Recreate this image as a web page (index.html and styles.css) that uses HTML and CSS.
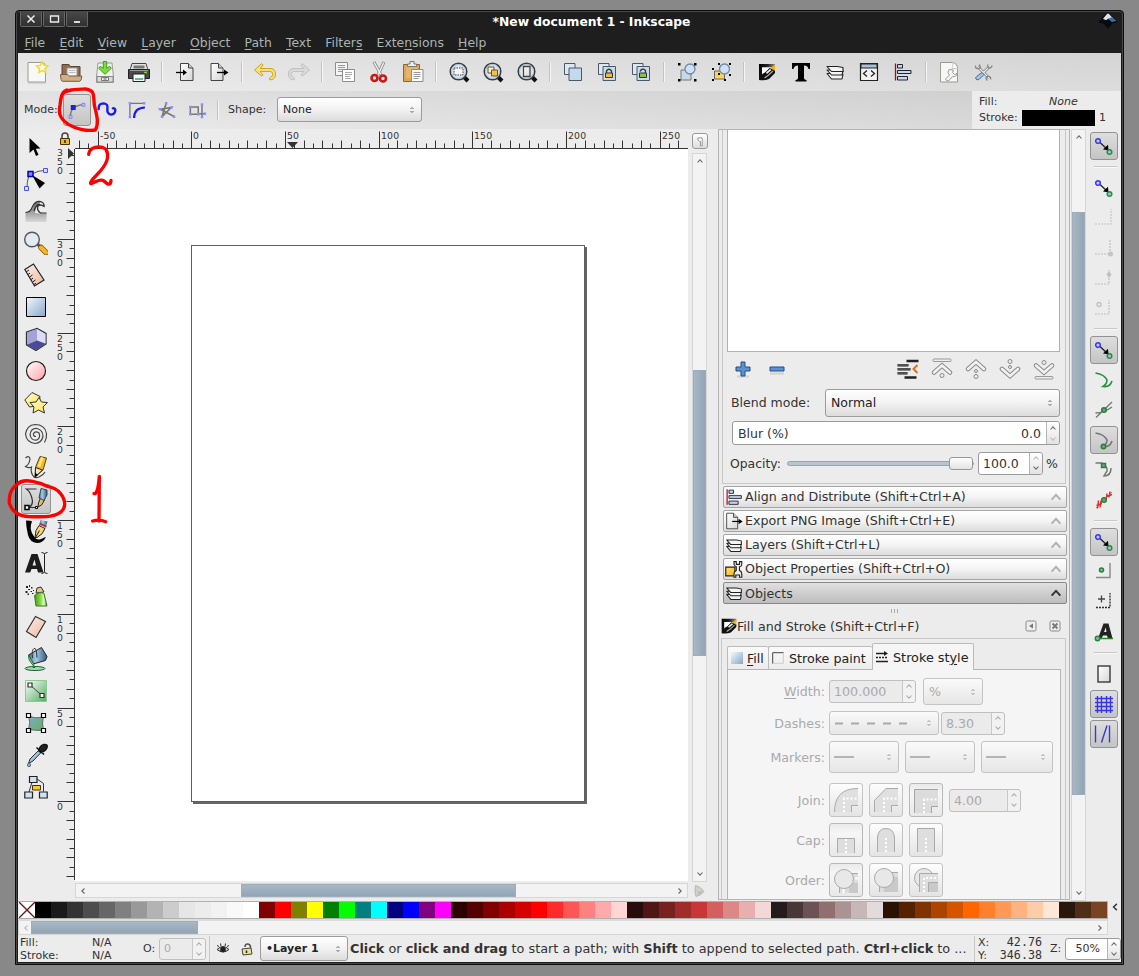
FILE: index.html
```html
<!DOCTYPE html>
<html lang="en">
<head>
<meta charset="utf-8">
<title>*New document 1 - Inkscape</title>
<link rel="stylesheet" href="styles.css">
</head>
<body>
<svg class="sprite" width="0" height="0" aria-hidden="true">
  <defs>
    <linearGradient id="gPaper" x1="0" y1="0" x2="1" y2="1"><stop offset="0" stop-color="#fff"/><stop offset="1" stop-color="#d6d6d6"/></linearGradient>
    <linearGradient id="gBlue" x1="0" y1="0" x2="1" y2="1"><stop offset="0" stop-color="#f4f8fb"/><stop offset="1" stop-color="#85a8cb"/></linearGradient>
    <linearGradient id="gPink" x1="0" y1="0" x2="1" y2="1"><stop offset="0" stop-color="#fff"/><stop offset="1" stop-color="#ffa0a8"/></linearGradient>
    <linearGradient id="gPeach" x1="0" y1="0" x2="1" y2="1"><stop offset="0" stop-color="#fbeee9"/><stop offset="1" stop-color="#f0b79f"/></linearGradient>
    <linearGradient id="gGreen" x1="0" y1="0" x2="1" y2="1"><stop offset="0" stop-color="#fff"/><stop offset="1" stop-color="#4fae5c"/></linearGradient>
    <linearGradient id="gTeal" x1="0" y1="0" x2="1" y2="1"><stop offset="0" stop-color="#86a9d0"/><stop offset="1" stop-color="#5db35c"/></linearGradient>
    <linearGradient id="gSteel" x1="0" y1="0" x2="1" y2="0"><stop offset="0" stop-color="#3c6c8c"/><stop offset=".4" stop-color="#a5cbe4"/><stop offset="1" stop-color="#2e5a7c"/></linearGradient>
    <linearGradient id="gYellow" x1="0" y1="0" x2="1" y2="1"><stop offset="0" stop-color="#fffbd8"/><stop offset="1" stop-color="#ffe24a"/></linearGradient>
    <linearGradient id="gGold" x1="0" y1="0" x2="1" y2="1"><stop offset="0" stop-color="#ffe680"/><stop offset="1" stop-color="#f5b400"/></linearGradient>
    <linearGradient id="gCan" x1="0" y1="0" x2="1" y2="0"><stop offset="0" stop-color="#3c9a1c"/><stop offset=".5" stop-color="#8fdc48"/><stop offset=".75" stop-color="#e2fbc8"/><stop offset="1" stop-color="#3c9a1c"/></linearGradient>
    <linearGradient id="gWave" x1="0" y1="0" x2="0" y2="1"><stop offset="0" stop-color="#666"/><stop offset="1" stop-color="#d8d8d8"/></linearGradient>
    <linearGradient id="gFrame" x1="0" y1="0" x2="1" y2=".3"><stop offset="0" stop-color="#000"/><stop offset=".5" stop-color="#222"/><stop offset="1" stop-color="#999"/></linearGradient>
  </defs>

  <symbol id="new" viewBox="0 0 24 24"><path d="M3 2.500h13.500q4 0 4 4V22H3z" fill="#f8f8f6" stroke="#999b96"/><path d="M3 23h18" stroke="#bbb"/><path d="M17.300 1.800l1.700 3.500 3.900.6-2.800 2.700.6 3.900-3.400-1.800-3.500 1.800.7-3.900-2.900-2.700 3.900-.6z" fill="#fffde0" stroke="#f2d832" stroke-width="1.500"/></symbol>
  <symbol id="open" viewBox="0 0 24 24"><path d="M3 18V4.500h7l1.500 2H21V18z" fill="#8b6f50" stroke="#5a4430"/><path d="M8 8h10v9H8z" fill="#f5f5f5" stroke="#999"/><path d="M9.500 10.500h7M9.500 12.500h7" stroke="#bbb"/><path d="M1.500 14.500h7l2 1.500h12.300q-.2 5-2 5.300H3.500q-1.800 0-2-6.800z" fill="#cfae88" stroke="#7a5c3c"/></symbol>
  <symbol id="save" viewBox="0 0 24 24"><path d="M5 3h14l1.500 14v5.500h-17V17z" fill="#f1f1ef" stroke="#9a9c98"/><path d="M4 16.500h16v5.500H4z" fill="#ddd" stroke="#888a85"/><path d="M8.500 17.500h7v3h-7z" fill="#fafafa" stroke="#777"/><path d="M10.500 19h3" stroke="#555"/><path d="M10.300 1.500h3.400v6.800l3-2 1.600 2L12 14.300 5.700 8.300l1.600-2 3 2z" fill="#7fdc3c" stroke="#3f9f1a"/></symbol>
  <symbol id="print" viewBox="0 0 24 24"><path d="M5 3.500h14l1.500 5v8h-17v-8z" fill="#e4e4e2" stroke="#444"/><path d="M6.500 5.500h11v3h-11z" fill="#777"/><path d="M1.500 9.500h21v9h-21z" fill="#4a4b4a" stroke="#222"/><path d="M3 10.500h18" stroke="#999"/><path d="M6 14h12v7.500H6z" fill="#fbfbfb" stroke="#222"/><path d="M8 18h8v2H8z" fill="#5fc08a"/><path d="M17 12.500h3" stroke="#7bd23a" stroke-width="1.500"/></symbol>
  <symbol id="import" viewBox="0 0 24 24"><path d="M7.500 3.500h8l4.500 4.500v12.500H7.500z" fill="url(#gPaper)" stroke="#444"/><path d="M15.500 3.500v4.500H20" fill="#ccc" stroke="#444"/><path d="M3 12.500h8" stroke="#000" stroke-width="1.300"/><path d="M10 9.500l4 3-4 3z"/></symbol>
  <symbol id="export" viewBox="0 0 24 24"><path d="M4 3.500h7.500l4.500 4.500v12.500H4z" fill="url(#gPaper)" stroke="#444"/><path d="M11.500 3.500v4.500H16" fill="#ccc" stroke="#444"/><path d="M10 12.500h9" stroke="#000" stroke-width="1.300"/><path d="M17 9.500l4.500 3-4.500 3z"/></symbol>
  <symbol id="undo" viewBox="0 0 24 24"><path d="M1.500 10l7-6.300 1.600 1.300-3 3.500H18q4.500.5 4.500 5.500t-4.300 5.700h-1.500q-.8-2 .8-2.500 2.500-.5 2.300-3-.2-2.500-2.500-2.800H7.100l3 3.500L8.500 16z" fill="#f7e27a" stroke="#caa41b"/></symbol>
  <symbol id="redo" viewBox="0 0 24 24"><path d="M22.500 10l-7-6.300-1.600 1.300 3 3.500H6Q1.500 9 1.500 14t4.300 5.700h1.500q.8-2-.8-2.500-2.500-.5-2.300-3 .2-2.500 2.500-2.800h10.200l-3 3.500 1.600 1.100z" fill="#dadada" stroke="#c0c0c0"/></symbol>
  <symbol id="copy" viewBox="0 0 24 24"><path d="M2.500 2.500h12v13h-12z" fill="#f4f4f4" stroke="#8c8e8a"/><path d="M5 5.500h7M5 7.500h7M5 9.500h5M5 11.500h7" stroke="#999"/><path d="M9.500 9.500h12v12h-12z" fill="#fff" stroke="#8c8e8a"/><path d="M12 12.500h7M12 14.500h7M12 16.500h5M12 18.500h6" stroke="#aaa"/></symbol>
  <symbol id="cut" viewBox="0 0 24 24"><path d="M7 2l7 13M17 2l-6 13" stroke="#8a8c88" stroke-width="3"/><path d="M7.200 2.500l6.600 12M16.800 2.500l-5.600 12" stroke="#eee" stroke-width="1.500"/><circle cx="7.500" cy="18" r="3" fill="none" stroke="#c81818" stroke-width="2.600"/><circle cx="16" cy="18.500" r="3" fill="none" stroke="#c81818" stroke-width="2.600"/></symbol>
  <symbol id="paste" viewBox="0 0 24 24"><path d="M2.500 4.500h16v17h-16z" fill="#dba65a" stroke="#9a6420"/><path d="M5 7h11v11H5z" fill="#e6b56c"/><path d="M6.500 6.500V4h2.500V1.500h4V4h2.500v2.500z" fill="#eee" stroke="#777"/><path d="M10.500 9.500h11.500v12H10.500z" fill="#fafafa" stroke="#8c8e8a"/><path d="M12.500 12.500h7M12.500 14.500h7M12.500 16.500h7M12.500 18.500h5" stroke="#999"/></symbol>
  <symbol id="lens" viewBox="0 0 24 24"><path d="M17 17l4 4" stroke="#111" stroke-width="4"/><circle cx="11.500" cy="11.500" r="8.300" fill="#dce6f1" stroke="#3c3f42" stroke-width="1.500"/><circle cx="11.500" cy="11.500" r="7" fill="none" stroke="#aebfd0"/></symbol>
  <symbol id="zoomsel" viewBox="0 0 24 24"><use href="#lens"/><rect x="7" y="8" width="9" height="7" fill="#f5f5f5" stroke="#444" stroke-dasharray="1.500 1"/></symbol>
  <symbol id="zoomdraw" viewBox="0 0 24 24"><use href="#lens"/><path d="M7 7h6v6H7z" fill="#fff3c0" stroke="#555"/><path d="M10.500 10h6v6h-6z" fill="#f6c23a" stroke="#555"/></symbol>
  <symbol id="zoompage" viewBox="0 0 24 24"><use href="#lens"/><path d="M8.500 6.500h6.500v10H8.500z" fill="url(#gPaper)" stroke="#444" stroke-width="1.300"/></symbol>
  <symbol id="dup" viewBox="0 0 24 24"><path d="M3.500 3.500h10.500v11h-10.500z" fill="#dde8f3" stroke="#4c5864"/><path d="M8 8h12.500v12.500H8z" fill="#c5d9ee" stroke="#4c5864"/></symbol>
  <symbol id="clone" viewBox="0 0 24 24"><path d="M3.500 3.500h10.500v11h-10.500z" fill="#dde8f3" stroke="#4c5864"/><path d="M8 6.500h12.500v14H8z" fill="#c9daeb" stroke="#4c5864"/><path d="M11.500 13v-2q2.500-3.500 5 0V13" fill="none" stroke="#333" stroke-width="1.300"/><path d="M10.500 13h7v4.500h-7z" fill="#f6bb2a" stroke="#333"/></symbol>
  <symbol id="unclone" viewBox="0 0 24 24"><path d="M3.500 3.500h10.500v11h-10.500z" fill="#dde8f3" stroke="#4c5864"/><path d="M8 6.500h12.500v14H8z" fill="#c9daeb" stroke="#4c5864"/><path d="M11 11.500q2-4 5.500-1V13" fill="none" stroke="#333" stroke-width="1.300"/><path d="M10.500 13h7v4.500h-7z" fill="#8bbf4c" stroke="#333"/></symbol>
  <symbol id="group" viewBox="0 0 24 24"><path d="M6 10h10v10H6z" fill="#c8d8e8" stroke="#777"/><circle cx="15" cy="9" r="5" fill="#cfe0f2" stroke="#6d8aa8" stroke-width="1.300"/><path d="M3 3h2.500v2.500H3zM19 3h2.500v2.500H19zM3 19h2.500v2.500H3zM19 19h2.500v2.500H19z"/></symbol>
  <symbol id="ungroup" viewBox="0 0 24 24"><path d="M5.500 11h10v8h-10z" fill="#ffd44a" stroke="#666"/><circle cx="15.500" cy="9" r="5" fill="#cfe0f2" stroke="#6d8aa8" stroke-width="1.300"/><path d="M9 3h2v2H9zM20 3h2v2h-2zM3 8h2v2H3zM3 19h2v2H3zM15 19h2v2h-2zM20 14h2v2h-2zM9 13h2v2H9z"/></symbol>
  <symbol id="fillstroke" viewBox="0 0 24 24"><path d="M4 4h16v3.500H7V17l-3 3z" fill="url(#gFrame)"/><path d="M7 7.500h9.500L7 17z" fill="#fff"/><path d="M4 20Q5 14.500 10 12.500l4.500-4.500 5.500 2v3l-6 6q-4 1.800-10 1z" fill="#111"/><path d="M9.500 18l3.500-2.500 5-4.500" fill="none" stroke="#a8a8a4" stroke-width="1.300"/><path d="M11 12.500l4-3.500 1.500 1-4.500 4z" fill="#eee"/><path d="M15.500 8L20 4.500v6.500z" fill="#f6b200"/></symbol>
  <symbol id="text" viewBox="0 0 24 24"><path d="M3 3h18v6h-1.500Q19 5.500 15 5.500V18q0 2 2.500 2v1.500h-11V20Q9 20 9 18V5.500Q5 5.500 4.500 9H3z"/></symbol>
  <symbol id="layers" viewBox="0 0 24 24"><g fill="#f4f4f4" stroke="#222" stroke-width="1.100" stroke-linejoin="round"><path d="M4 13.500l4.500 5.500h10.500l1-4.500-4.500-1z"/><path d="M4 10l4.500 5h10.500l1-4-4.500-1z"/><path d="M4 6.500h10.500l5.500 1v4H8.500z"/></g></symbol>
  <symbol id="xml" viewBox="0 0 24 24"><path d="M3.500 3.500h17v17h-17z" fill="#f2f2f2" stroke="#222" stroke-width="1.200"/><path d="M4 4h16v4H4z" fill="#a9c1d9" stroke="#222"/><path d="M10 10.500l-3.500 3 3.500 3M14 10.500l3.500 3-3.500 3" fill="none" stroke="#222" stroke-width="1.300"/></symbol>
  <symbol id="align" viewBox="0 0 24 24"><path d="M4.500 3.500v17" stroke="#c00010" stroke-width="1.300"/><path d="M6.500 4.500h5v3.500h-5zM6.500 10.500h13.500v3h-13.500zM6.500 16.500h10v3.500h-10z" fill="#c5d9ee" stroke="#223"/></symbol>
  <symbol id="docprops" viewBox="0 0 24 24"><path d="M3.500 2.500h12q5 1 5 6v13.500h-17z" fill="#f7f7f6" stroke="#999b96"/><path d="M15.500 2.500q1 3-.5 6h5.500" fill="#fff" stroke="#ccc"/><path d="M12 9.500q-2.500 3 .5 5.500l-4 4q1 2.500 3 2l4-4.500q4 1 4.500-3l-2.500 1-2-2 1-2.500z" fill="#f4f4f4" stroke="#999b96"/></symbol>
  <symbol id="prefs" viewBox="0 0 24 24"><path d="M7 7l11 11M18 7l-6 6" stroke="#777" stroke-width="2.600"/><path d="M7 7l11 11M18 7l-6 6" stroke="#eee" stroke-width="1.200"/><path d="M4.500 5.500q-.5 3.500 3 3t.5-4M19.800 19.500q.2-3.500-3-3t-.5 4M17 4.500q-1 4 1.500 3.500t2.500-2.500" fill="none" stroke="#888" stroke-width="1.300"/><path d="M11 12.500l2 2-5 5q-2 .8-3-.5t.7-2.500z" fill="#a9c5e8" stroke="#3d68a4"/></symbol>

  <symbol id="bezier" viewBox="0 0 24 24"><path d="M4 20Q4 7 19 5.500" fill="none" stroke="#777" stroke-width="1.700"/><path d="M4.500 6h6v6h-6z" fill="#2020d8"/><path d="M2.500 18.500h3.500v3.500H2.500zM18 4h3.500v3.500H18z" fill="#c0c4ff" stroke="#7078f0"/></symbol>
  <symbol id="spiro" viewBox="0 0 24 24"><path d="M2 11Q1.500 4 8 4q5.500.5 4.500 6.500t4.500 7q5-.5 5-5.500-.5-2.500-3-2" fill="none" stroke="#1a1af0" stroke-width="2.900" stroke-linecap="round"/></symbol>
  <symbol id="bspline" viewBox="0 0 24 24"><path d="M3.500 20.500V4H20" fill="none" stroke="#777" stroke-width="1.600"/><path d="M2 2.500h3v3H2zM2 19h3v3H2zM19 2.500h3v3h-3z" fill="#8c90f4"/><path d="M8.500 21.500q0-12 13-12.500" fill="none" stroke="#1a1af0" stroke-width="2.700"/></symbol>
  <symbol id="zigzag" viewBox="0 0 24 24"><path d="M11 4L6 20 17 9 4 11l17 9" fill="none" stroke="#777" stroke-width="2"/><g fill="#8c90f4"><path d="M9.500 2.500h3v3h-3zM2.500 9.500h3v3h-3zM4.500 18.500h3v3h-3zM16 7.500h3v3h-3zM19 18.500h3v3h-3z"/></g></symbol>
  <symbol id="paraxial" viewBox="0 0 24 24"><path d="M4 17V8.500h9.500V17zM13 16.500h9M18 6v15" fill="none" stroke="#777" stroke-width="1.800"/><g fill="#8c90f4"><path d="M2.500 7h3v3h-3zM2.500 15.500h3v3h-3zM12 15.500h3v3h-3zM16.500 4h3v3h-3zM16.500 19h3v3h-3zM20 15h3v3h-3z"/></g></symbol>

  <symbol id="selector" viewBox="0 0 24 24"><path d="M5.500 3v15l4-3.500 2.500 6.500 2.500-1.200-2.700-6 4.700-.3z"/></symbol>
  <symbol id="nodes" viewBox="0 0 24 24"><path d="M3 21Q3 8 8 7q6-3.500 12-3.500" fill="none" stroke="#555"/><path d="M4 4.500h5v5h-5z" fill="#8088ff" stroke="#0000d0" stroke-width="1.500"/><path d="M.5 19.500h4v4h-4zM19.500 1.500h4v4h-4z" fill="#dcdcff" stroke="#4a52ee"/><path d="M8 8l13 8-5.500 5.500z"/></symbol>
  <symbol id="tweak" viewBox="0 0 24 24"><path d="M1.500 14q5 .5 7-5 2-7 8-6 4.500 1 4.500 5-3-3-5.500-1-2 2.500.5 6 3 2 6.500 1v9h-21z" fill="url(#gWave)"/><path d="M11 14q1-8 5-10.500 3 0 4.500 3-4-2-6 1-1 4 2 7z" fill="#eee"/><path d="M1.500 13.500q5 0 7-6 3-6 8-5 4 1 3.500 5-4-3-6.500 0-.5 4.500 3 6.500h6M10 12q2-7 6-7" fill="none" stroke="#333" stroke-width="1.200"/></symbol>
  <symbol id="magnify" viewBox="0 0 24 24"><path d="M13 13l4 3" stroke="#555" stroke-width="3"/><path d="M17 16.500l5 5" stroke="#775511" stroke-width="5.500" stroke-linecap="round"/><path d="M17 16.500l5 5" stroke="#f8b421" stroke-width="4" stroke-linecap="round"/><circle cx="8" cy="8.500" r="7.300" fill="#e1ebf3" stroke="#555" stroke-width="1.400"/></symbol>
  <symbol id="measure" viewBox="0 0 24 24"><path d="M.8 6.500L9.500 1l10.500 16L10.500 23z" fill="url(#gPeach)" stroke="#222" stroke-width="1.200"/><path d="M2 9l3-2M4 11.500l2-1.300M5.500 14l3-2M7 16.500l2-1.300M8.500 19l3-2M10 21.500l2-1.300" stroke="#222"/></symbol>
  <symbol id="rect" viewBox="0 0 24 24"><path d="M2.500 2.500h19v19h-19z" fill="url(#gBlue)" stroke="#000"/></symbol>
  <symbol id="box3d" viewBox="0 0 24 24"><path d="M2.500 5L13 1.500l9 5v10.500L12 23.500 2.500 18z" fill="#b0b0e0" stroke="#333" stroke-width="1.300"/><path d="M13 2l8.500 5v9.500l-8.500-3z" fill="#dcdcfa"/><path d="M3 5.500l10-3.500v11.500L3 17.500z" fill="#a3a3d4"/><path d="M3 17.800l10-4.300 8.500 3.200-9.500 6z" fill="#4a4a98"/></symbol>
  <symbol id="ellipse" viewBox="0 0 24 24"><circle cx="12" cy="12" r="9.500" fill="url(#gPink)" stroke="#222" stroke-width="1.200"/></symbol>
  <symbol id="star" viewBox="0 0 24 24"><path d="M.8 9L8 1.500l8 4-1 9-9.500 1.500z" fill="url(#gYellow)" stroke="#333"/><path d="M15 6.500l2.500 4.500 6 .5-4.500 4.500 1.500 6-6-3-5.500 3 1-6L6 11.500l6-.5z" fill="url(#gYellow)" stroke="#333"/></symbol>
  <symbol id="spiral" viewBox="0 0 24 24"><path d="M12 13.500q-3 0-2.500-3 2-3 5.500-.5 2 4.500-2 7-6 1-7-5.500Q7 5 13 5.500q6 1.500 6 8-1.500 6.500-8 7Q2.500 19.500 1.500 11 3 2 11 1.500q10 0 11.500 9 .5 5-2 9" fill="none" stroke="#444" stroke-width="1.200"/></symbol>
  <symbol id="pencil" viewBox="0 0 24 24"><path d="M1.500 3q4-3 4.500 1Q5 10 1.500 11.500q3 2 6 .5-1 5 1 8 2 4 6.500 2t6-5" fill="none" stroke="#444" stroke-width="1.200"/><path d="M12 11l4-9.500 6.500 1.500L19 15l-7.500 6.500z" fill="#f8b81c" stroke="#554411"/><path d="M15 11.500l3.500-9" stroke="#ffe790" stroke-width="2.500"/><path d="M11.500 12.500l7 2.500-7.500 7z" fill="#f6e3b2" stroke="#222"/><path d="M11 17.500l3 2.500-3 2.500z"/></symbol>
  <symbol id="pen" viewBox="0 0 24 24"><path d="M12.500 2H2.500Q7 5 8.500 14q0 4-3 6.500h8" fill="none" stroke="#333" stroke-width="1.200"/><path d="M1 18.500h4v4H1z" fill="#fff" stroke="#000" stroke-width="1.500"/><path d="M11.500 19.500h2v2h-2z" fill="#fff" stroke="#000"/><path d="M16.500 11l4 2-3 5-3.500 2 .5-4z" fill="#edbd55" stroke="#222"/><path d="M17 1.500l6 1.500v5l-3 5.500-5-2.500z" fill="url(#gSteel)" stroke="#345"/></symbol>
  <symbol id="calligraphy" viewBox="0 0 24 24"><path d="M2 1.500q5 0 6 1Q4.500 10 10 17.500q3 4.500 7 2.500t5-2q-3 6-9 6Q6 23.500 4 16 2 8 2 1.500z"/><path d="M11 18.500q0-8 4-12l6 3q-2 6-8 9z" fill="#f5d377" stroke="#222"/><path d="M11.500 18.500l4-7" stroke="#222"/><path d="M16.500 1l7 1.500-2 6.500-6-3z" fill="url(#gSteel)"/><path d="M15.500 4.500l7 3" stroke="#d02030" stroke-width="1.500"/></symbol>
  <symbol id="texttool" viewBox="0 0 24 24"><path d="M1 21.500L7.500 3h6l6 18.500h-5.500l-1-3.500H7.500l-1.300 3.500zM8.500 14.500h3.500L10.500 8.500z" fill="#1c1c1c"/><path d="M17.500 1.500q3 0 3 2v17q0 2-3 2M23.500 1.500q-3 0-3 2M20.500 20.500q0 2 3 2" fill="none" stroke="#222"/></symbol>
  <symbol id="spray" viewBox="0 0 24 24"><path d="M2 3h2v2H2zM5 2h1v2H5zM4 6h2v1H4zM1.500 8h2v2h-2zM7 4h1.500v1.500H7zM6.500 8H8v1H6.500zM3.500 10.500H5v1.500H3.500zM9 7h1v1H9zM8 10h1.500v1H8z" fill="#222"/><path d="M12 10l1-5 4-1 3 5z" fill="#e4c88a" stroke="#333"/><path d="M10.500 12.500q5-4.500 9.500-2l3 12.500H12z" fill="url(#gCan)" stroke="#3c7a24"/></symbol>
  <symbol id="eraser" viewBox="0 0 24 24"><path d="M11.500 1.500l10 5L12 22.500l-9.500-6z" fill="url(#gPeach)" stroke="#333" stroke-width="1.200"/></symbol>
  <symbol id="bucket" viewBox="0 0 24 24"><ellipse cx="11" cy="21.500" rx="10" ry="2" fill="#9edfae" stroke="#225c33"/><path d="M4.500 8l13-7.500 5.500 9-1.500 4L9 17z" fill="url(#gSteel)" stroke="#222"/><path d="M4.500 8l5.500 9.500-1 3h2L8 17q-4-4-3.500-9z" fill="#8fd39b" stroke="#2a6b3a"/><path d="M8.500 11q-1-8 1.500-9.500t3 9" fill="none" stroke="#333"/></symbol>
  <symbol id="gradient" viewBox="0 0 24 24"><path d="M1.500 1.500h21v21h-21z" fill="url(#gGreen)" stroke="#8fc796"/><path d="M6 6l12 10.500" stroke="#444"/><path d="M4 4h4v4H4zM16 14.500h4v4h-4z" fill="#fff" stroke="#333" stroke-width="1.200"/></symbol>
  <symbol id="mesh" viewBox="0 0 24 24"><path d="M4.500 4.500q7 4 15 1-2 6 0 14-8 0-15-1 2.500-7 0-14z" fill="url(#gTeal)" stroke="#666"/><path d="M2.500 2.500h4v4h-4zM17.500 2.500h4v4h-4zM2.500 17.500h4v4h-4zM17.500 17.500h4v4h-4z" fill="#fff" stroke="#000" stroke-width="1.200"/></symbol>
  <symbol id="dropper" viewBox="0 0 24 24"><path d="M15 7L6 16l-1.500 4.500L9 18l8.500-9z" fill="#9cc0e8" stroke="#333"/><path d="M12.500 4.500l7.500 7M15 8q0-5 5-6.500 4-.5 3 3t-6 5z" fill="#222" stroke="#111" stroke-width="1.500"/><path d="M5 19q-3 4.500 0 4.500t0-4.500z" fill="#9cc0e8" stroke="#456"/></symbol>
  <symbol id="connector" viewBox="0 0 24 24"><path d="M8 7L5 17M13 4l6.500 4.500v8" fill="none" stroke="#333"/><path d="M5.500 1.500h7.500v6H5.500zM.8 17h7.700v6H.8zM15.500 17h7.700v6h-7.700z" fill="#cfe3f7" stroke="#222" stroke-width="1.200"/><path d="M8.500 10.500h8v4.500h-8z" fill="#ffc92e" stroke="#443300"/></symbol>

  <symbol id="snap" viewBox="0 0 24 24"><path d="M8 8.500l8.500 8" stroke="#222" stroke-width="1.200"/><path d="M11 15.500l5.500.7-.5-5.500z"/><circle cx="6" cy="7" r="2.300" fill="#c8caff" stroke="#3838f4" stroke-width="1.500"/><circle cx="17.500" cy="18" r="2.300" fill="#a9b8d8" stroke="#22933a" stroke-width="1.500"/></symbol>
  <symbol id="snapbb" viewBox="0 0 24 24"><path d="M3 18h16V3" fill="none" stroke="#c6c6c6" stroke-width="1.200" stroke-dasharray="2 1"/></symbol>
  <symbol id="snapcorner" viewBox="0 0 24 24"><path d="M3 18h15V3" fill="none" stroke="#c0c0c0" stroke-width="1.200" stroke-dasharray="2 1"/><circle cx="18.500" cy="18" r="2.500" fill="#c4c4c4"/></symbol>
  <symbol id="snapmid" viewBox="0 0 24 24"><path d="M3 18h14V4" fill="none" stroke="#c0c0c0" stroke-width="1.200" stroke-dasharray="2 1"/><path d="M17 5l2.500 3.500L17 12l-2.500-3.500z" fill="#c0c0c0"/></symbol>
  <symbol id="snapcen" viewBox="0 0 24 24"><path d="M3 18h14V4" fill="none" stroke="#c0c0c0" stroke-width="1.200" stroke-dasharray="2 1"/><circle cx="7" cy="8.500" r="2" fill="none" stroke="#c0c0c0" stroke-width="1.300"/></symbol>
  <symbol id="curve" viewBox="0 0 24 24"><path d="M3.500 5q9 1.500 11.500 7 0 4-4 6.500 7 1 9-5.500" fill="none" stroke="currentColor" stroke-width="1.600"/></symbol>
  <symbol id="gnode" viewBox="0 0 24 24"><circle cx="12" cy="12" r="2.300" fill="#88a" stroke="#22882c" stroke-width="1.500"/></symbol>
  <symbol id="cross" viewBox="0 0 24 24"><path d="M4 19.500L20 4M3.500 15q8 0 16.500-6" fill="none" stroke="#777" stroke-width="1.400"/><use href="#gnode"/></symbol>
  <symbol id="cusp" viewBox="0 0 24 24"><use href="#curve"/><use href="#gnode" x="-.5" y="6.500"/></symbol>
  <symbol id="smooth" viewBox="0 0 24 24"><path d="M3.500 5H10q6 4 5 8l-3 5q7 0 7-8" fill="none" stroke="#777" stroke-width="1.500"/><path d="M9.500 5.500h4v4h-4z" fill="#88a" stroke="#22882c" stroke-width="1.500"/></symbol>
  <symbol id="linemid" viewBox="0 0 24 24"><path d="M4 20L20 4" stroke="#888"/><path d="M6.500 12.500l-1 8M9 12.500l-1 7M15 5.500l-1 6.500M18 3.500l-1 6M4.500 17.500l5.500-2M14.500 8.500l5.500-2" stroke="#e03030" stroke-width="1.500"/><use href="#gnode"/></symbol>
  <symbol id="objmid" viewBox="0 0 24 24"><path d="M4 17.500h14V3" fill="none" stroke="#888" stroke-width="1.400"/><circle cx="9.500" cy="10" r="2" fill="#9ab" stroke="#22882c" stroke-width="1.500"/></symbol>
  <symbol id="rotcen" viewBox="0 0 24 24"><path d="M4 17.500h14V3" fill="none" stroke="#333" stroke-width="1.400" stroke-dasharray="2 1"/><path d="M6 9h7M9.500 5.500v7" stroke="#444" stroke-width="1.300"/></symbol>
  <symbol id="textbase" viewBox="0 0 24 24"><path d="M6 18.500l5.500-15h5l4 15h-4.500l-1-3h-4l-1.500 3zM12 12h2.500l-.7-4.500z" fill="#222"/><path d="M5 18.500h16" stroke="#22882c" stroke-width="1.500"/><circle cx="5.500" cy="18.500" r="2.200" fill="#9ab" stroke="#22882c" stroke-width="1.500"/></symbol>
  <symbol id="page" viewBox="0 0 24 24"><path d="M6 4h12v16H6z" fill="url(#gPaper)" stroke="#444" stroke-width="1.500"/></symbol>
  <symbol id="grid" viewBox="0 0 24 24"><path d="M3 6.500h18M3 10.500h18M3 14.500h18M3 18.500h18M5.500 4v17M9.500 4v17M14.500 4v17M18.500 4v17" stroke="#3434e8" stroke-width="1.400"/></symbol>
  <symbol id="guides" viewBox="0 0 24 24"><path d="M3.500 3.500v17M17.500 3.500v17M9.500 20.500l5.500-17" stroke="#3a3ad8" stroke-width="1.400"/></symbol>

  <symbol id="up" viewBox="0 0 8 8"><path d="M1.500 5.500L4 2.800l2.500 2.700" fill="none" stroke="currentColor" stroke-width="1.100"/></symbol>
  <symbol id="down" viewBox="0 0 8 8"><path d="M1.500 2.500L4 5.200l2.500-2.700" fill="none" stroke="currentColor" stroke-width="1.100"/></symbol>
  <symbol id="left" viewBox="0 0 8 8"><path d="M5.500 1.500L2.800 4l2.700 2.500" fill="none" stroke="currentColor" stroke-width="1.100"/></symbol>
  <symbol id="right" viewBox="0 0 8 8"><path d="M2.500 1.500L5.200 4 2.500 6.500" fill="none" stroke="currentColor" stroke-width="1.100"/></symbol>
  <symbol id="updown" viewBox="0 0 8 8"><path d="M2.500 3L4 1.500 5.500 3M2.500 5L4 6.500 5.500 5" fill="none" stroke="currentColor"/></symbol>
  <symbol id="lock" viewBox="0 0 14 14"><path d="M4 7V4q0-3 3-3t3 3v3" fill="none" stroke="#444" stroke-width="1.500"/><path d="M2.500 6.500h9v6h-9z" fill="#f0b72a" stroke="#4a3200"/><path d="M7 8v3" stroke="#222" stroke-width="1.500"/></symbol>
  <symbol id="unlock" viewBox="0 0 14 14"><path d="M10.500 8V4.500Q10 2 7.500 2T5 5" fill="none" stroke="#555" stroke-width="1.500"/><path d="M2 7l9-1 1 6-9 1z" fill="#f3e08a" stroke="#444"/><path d="M6.500 8.500v2.500" stroke="#222" stroke-width="1.500"/></symbol>
  <symbol id="eye" viewBox="0 0 14 14"><path d="M1 7.500q6-6 12 0-6 5-12 0z" fill="#ccc" stroke="#333"/><circle cx="7" cy="7.500" r="2.800" fill="#222"/><path d="M2.500 5L1.500 3M5 4L4.500 1.500M9 4l.5-2.500M11.500 5l1-2" stroke="#333"/></symbol>
  <symbol id="plus" viewBox="0 0 24 24"><path d="M6 19.500h12" stroke="#d0d0d0" stroke-width="2"/><path d="M10 5h4v5h5v4h-5v5h-4v-5H5v-4h5z" fill="#5c91cc" stroke="#1f4f8f"/></symbol>
  <symbol id="minus" viewBox="0 0 24 24"><path d="M5 16.500h14" stroke="#d0d0d0" stroke-width="2"/><path d="M5 10h14v4H5z" fill="#5c91cc" stroke="#1f4f8f"/></symbol>
  <symbol id="indent" viewBox="0 0 24 24"><path d="M10.500 4h12M1.500 8.300h11M1.500 12.300h13M1.500 16.300h10M8.500 20.500h12" stroke="#222" stroke-width="2.400"/><path d="M2 8h10M2 12h12M2 16h9" stroke="#999" stroke-width=".8"/><path d="M21.500 8L17.500 12l4 4" fill="none" stroke="#e0701a" stroke-width="2"/></symbol>
  <symbol id="chev" viewBox="0 0 24 24"><path d="M4 14l8-7 8 7" fill="none" stroke="#888" stroke-width="4.600" stroke-linecap="round"/><path d="M4 14l8-7 8 7" fill="none" stroke="#f2f2f2" stroke-width="2.600" stroke-linecap="round"/></symbol>
  <symbol id="totop" viewBox="0 0 24 24"><rect x="3" y="2" width="18" height="2.500" rx="1" fill="#eee" stroke="#999"/><use href="#chev" y="1.500"/><circle cx="12" cy="18.500" r="2" fill="#eee" stroke="#888"/></symbol>
  <symbol id="raise" viewBox="0 0 24 24"><use href="#chev" y="-2"/><circle cx="12" cy="14" r="1.500" fill="#eee" stroke="#888"/><circle cx="12" cy="19.500" r="2" fill="#eee" stroke="#888"/></symbol>
  <symbol id="lower" viewBox="0 0 24 24"><use href="#raise" transform="rotate(180 12 12)"/></symbol>
  <symbol id="tobottom" viewBox="0 0 24 24"><use href="#totop" transform="rotate(180 12 12)"/></symbol>
  <symbol id="props" viewBox="0 0 24 24"><path d="M3 10h10v9.500H3z" fill="url(#gGold)" stroke="#222" stroke-width="1.300"/><path d="M12 4v3q1 2.500 2.500 2.500v4q-2.500 1-2.500 4V21h2v-2.500h4V21h2.500v-3.500q0-3-2.500-4v-4Q20.500 9 20.500 7V4H18v3h-3.500V4z" fill="#eee" stroke="#222" stroke-width="1.200"/></symbol>
  <symbol id="fillicon" viewBox="0 0 12 12"><path d="M0 0h12v12H0z" fill="url(#gBlue)"/></symbol>
  <symbol id="strokeicon" viewBox="0 0 12 12"><path d="M11.500 .7H.7v10.800" fill="none" stroke="#444"/><path d="M11.300 1v10.300H1" fill="none" stroke="#ccc"/></symbol>
  <symbol id="styleicon" viewBox="0 0 12 12"><path d="M0 2.500h9M0 10.500h12" stroke="#222" stroke-width="1.300"/><path d="M8 0l4 2.500L8 5z" fill="#222"/><path d="M0 6.500h12" stroke="#222" stroke-width="1.300" stroke-dasharray="2 1"/></symbol>

  <symbol id="joinround" viewBox="0 0 28 28"><path d="M2.500 26q0-23.500 23.500-23.500V20h-7v6z" fill="#e0e0e0"/><path d="M2.500 26Q2.500 2.500 26 2.500M19.500 26v-6.500H26" fill="none" stroke="#aaa"/><path d="M12 26V12.500H26" fill="none" stroke="#fff" stroke-width="2" stroke-dasharray="2 2"/></symbol>
  <symbol id="joinbevel" viewBox="0 0 28 28"><path d="M2.500 26V14.500L14 2.500h12V20h-7v6z" fill="#e0e0e0"/><path d="M2.500 26V14.500L14 2.500h12M19.500 26v-6.500H26" fill="none" stroke="#aaa"/><path d="M12 26V12.500H26" fill="none" stroke="#fff" stroke-width="2" stroke-dasharray="2 2"/></symbol>
  <symbol id="joinmiter" viewBox="0 0 28 28"><path d="M2.500 27V3.500H26V21h-7v6z" fill="#dcdcdc"/><path d="M2.500 27V3.500H26M19.500 27v-6.500H26" fill="none" stroke="#a4a4a4"/><path d="M12 27V13.500H26" fill="none" stroke="#fff" stroke-width="2" stroke-dasharray="2 2"/></symbol>
  <symbol id="capbutt" viewBox="0 0 28 28"><path d="M5.500 27V12.500h17V27" fill="#dedede" stroke="#aaa"/><path d="M14 27V13" stroke="#fff" stroke-width="2" stroke-dasharray="2 2"/></symbol>
  <symbol id="capround" viewBox="0 0 28 28"><path d="M5.500 26V11q1-8.500 8.500-8.500t8.500 8.500v15" fill="#dedede" stroke="#aaa"/><path d="M14 26V12" stroke="#fff" stroke-width="2" stroke-dasharray="2 2"/></symbol>
  <symbol id="capsquare" viewBox="0 0 28 28"><path d="M5.500 26V2.500h17V26" fill="#dedede" stroke="#aaa"/><path d="M14 26V12" stroke="#fff" stroke-width="2" stroke-dasharray="2 2"/></symbol>
  <symbol id="order1" viewBox="0 0 28 28"><path d="M7 27V7.500h19v10h-9V27z" fill="#ddd"/><path d="M7.500 27v-8M20 7.500h6" stroke="#aaa"/><path d="M17 17h9v10H17z" fill="#c8c9ca"/><path d="M23 12.500h3M11.500 27v-5" stroke="#fff" stroke-width="2"/><circle cx="12" cy="13" r="9.500" fill="#e8e8e8" stroke="#aaa"/></symbol>
  <symbol id="order2" viewBox="0 0 28 28"><path d="M7 26V7h19v9h-9v10z" fill="#ddd"/><path d="M7.500 26v-7M20 6.500h6" stroke="#aaa"/><path d="M12 11h14v15H12z" fill="#c8c9ca"/><circle cx="12" cy="12" r="9.500" fill="#e8e8e8" stroke="#aaa"/></symbol>
  <symbol id="order3" viewBox="0 0 28 28"><circle cx="12" cy="12" r="9.500" fill="#e8e8e8" stroke="#aaa"/><path d="M7.500 26V7.500H26v9h-9V26z" fill="#dedede"/><path d="M7.500 26V7.500H26" fill="none" stroke="#aaa"/><path d="M17 17h9v9h-9z" fill="#c8c9ca"/><path d="M16.500 26v-9.500H26" fill="none" stroke="#aaa"/><path d="M12 26V12H26" fill="none" stroke="#fff" stroke-width="2" stroke-dasharray="2 2"/></symbol>
</svg>

<div class="window">
  <header class="titlebar">
    <div class="wm-buttons">
      <span class="wm"><svg viewBox="0 0 12 12"><path d="M2.500 2.500l7 7M9.500 2.500l-7 7" stroke="#eee" stroke-width="1.500"/></svg></span>
      <span class="wm"><svg viewBox="0 0 12 12"><path d="M2.500 3h8v6h-8z" fill="none" stroke="#eee" stroke-width="1.300"/></svg></span>
      <span class="wm"><svg viewBox="0 0 12 12"><path d="M3 9h6" stroke="#eee" stroke-width="1.800"/></svg></span>
    </div>
    <h1>*New document 1 - Inkscape</h1>
    <svg class="logo" viewBox="0 0 20 18"><path d="M1 9l7-7q2-1.500 4 0l7 7q1 2-3 2l-3 1q1 2-1 2l-2 3-2-3q-3 0-1-2l-4-1q-3 0-2-2z" fill="#06090e"/><path d="M5 6.800L9 2q1-.8 2 0l4.500 4.800-2.500 1-2.500-1.300-2.500 1.800z" fill="#dfe5ec"/><path d="M10 7l4-2 4.500 4-4.500 1z" fill="#3d6ea8"/></svg>
  </header>

  <nav class="menubar">
    <span><u>F</u>ile</span><span><u>E</u>dit</span><span><u>V</u>iew</span><span><u>L</u>ayer</span><span><u>O</u>bject</span><span><u>P</u>ath</span><span><u>T</u>ext</span><span>Filter<u>s</u></span><span>Exte<u>n</u>sions</span><span><u>H</u>elp</span>
  </nav>

  <div class="toolbar">
    <svg class="ic"><use href="#new"/></svg><svg class="ic"><use href="#open"/></svg><svg class="ic"><use href="#save"/></svg><svg class="ic"><use href="#print"/></svg><i class="vsep"></i>
    <svg class="ic"><use href="#import"/></svg><svg class="ic"><use href="#export"/></svg><i class="vsep"></i>
    <svg class="ic"><use href="#undo"/></svg><svg class="ic"><use href="#redo"/></svg><i class="vsep"></i>
    <svg class="ic"><use href="#copy"/></svg><svg class="ic"><use href="#cut"/></svg><svg class="ic"><use href="#paste"/></svg><i class="vsep"></i>
    <svg class="ic"><use href="#zoomsel"/></svg><svg class="ic"><use href="#zoomdraw"/></svg><svg class="ic"><use href="#zoompage"/></svg><i class="vsep"></i>
    <svg class="ic"><use href="#dup"/></svg><svg class="ic"><use href="#clone"/></svg><svg class="ic"><use href="#unclone"/></svg><i class="vsep"></i>
    <svg class="ic"><use href="#group"/></svg><svg class="ic"><use href="#ungroup"/></svg><i class="vsep"></i>
    <svg class="ic"><use href="#fillstroke"/></svg><svg class="ic"><use href="#text"/></svg><svg class="ic"><use href="#layers"/></svg><svg class="ic"><use href="#xml"/></svg><svg class="ic"><use href="#align"/></svg><i class="vsep"></i>
    <svg class="ic"><use href="#docprops"/></svg><svg class="ic"><use href="#prefs"/></svg>
  </div>

  <div class="options">
    <div class="modebar">
      <span class="mode-label">Mode:</span>
      <span class="mode-btn pressed"><svg><use href="#bezier"/></svg></span>
      <span class="mode-btn"><svg><use href="#spiro"/></svg></span>
      <span class="mode-btn"><svg><use href="#bspline"/></svg></span>
      <span class="mode-btn"><svg><use href="#zigzag"/></svg></span>
      <span class="mode-btn"><svg><use href="#paraxial"/></svg></span>
      <i class="vsep"></i>
      <span class="shape-label">Shape:</span>
      <div class="select shape"><span>None</span><svg class="ar"><use href="#updown"/></svg></div>
    </div>
    <div class="indicator">
      <div class="ind-row"><span>Fill:</span><em>None</em></div>
      <div class="ind-row"><span>Stroke:</span><b class="ind-stroke"></b><span>1</span></div>
    </div>
  </div>

  <div class="main">
    <aside class="toolbox">
      <span><svg><use href="#selector"/></svg></span><span><svg><use href="#nodes"/></svg></span><span><svg><use href="#tweak"/></svg></span><span><svg><use href="#magnify"/></svg></span><span><svg><use href="#measure"/></svg></span><span><svg><use href="#rect"/></svg></span><span><svg><use href="#box3d"/></svg></span><span><svg><use href="#ellipse"/></svg></span><span><svg><use href="#star"/></svg></span><span><svg><use href="#spiral"/></svg></span><span><svg><use href="#pencil"/></svg></span><span class="pressed"><svg><use href="#pen"/></svg></span><span><svg><use href="#calligraphy"/></svg></span><span><svg><use href="#texttool"/></svg></span><span><svg><use href="#spray"/></svg></span><span><svg><use href="#eraser"/></svg></span><span><svg><use href="#bucket"/></svg></span><span><svg><use href="#gradient"/></svg></span><span><svg><use href="#mesh"/></svg></span><span><svg><use href="#dropper"/></svg></span><span><svg><use href="#connector"/></svg></span>
    </aside>

    <section class="editor">
      <div class="corner"><svg><use href="#lock"/></svg></div>
      <svg id="hruler" width="613" height="20"></svg>
      <div class="corner-btn"><svg viewBox="0 0 16 16"><path d="M5.500 4.500h5v9h-2v-5h-1q-2.500-1-2-4z" fill="#fff" stroke="#888"/></svg></div>
      <svg id="vruler" width="18" height="732"></svg>
      <div class="canvas"><div class="sheet"></div></div>
      <div class="vscroll"><svg class="ar"><use href="#up"/></svg><i></i><svg class="ar"><use href="#down"/></svg></div>
      <div></div>
      <div class="hscroll"><svg class="ar"><use href="#left"/></svg><i></i><svg class="ar"><use href="#right"/></svg></div>
      <div class="cms"><svg viewBox="0 0 14 14"><path d="M3.500 1.500q5 1 8.500 6-3 4-8 5-2-5-.5-11z" fill="#d0d0c8" stroke="#b8b8b8"/><path d="M6 7l6 .5-6 4z" fill="#b5c0ba"/></svg></div>
    </section>

    <section class="dock">
      <div class="objects">
        <div class="list"></div>
        <div class="obj-tools">
          <svg class="ic"><use href="#plus"/></svg><svg class="ic"><use href="#minus"/></svg><i class="grow"></i>
          <svg class="ic"><use href="#indent"/></svg><svg class="ic"><use href="#totop"/></svg><svg class="ic"><use href="#raise"/></svg><svg class="ic"><use href="#lower"/></svg><svg class="ic"><use href="#tobottom"/></svg>
        </div>
        <div class="blend"><span>Blend mode:</span><div class="select"><span>Normal</span><svg class="ar"><use href="#updown"/></svg></div></div>
        <div class="spin blur"><div class="entry"><span>Blur (%)</span><span>0.0</span></div><div class="step"><svg><use href="#up"/></svg><svg class="dim"><use href="#down"/></svg></div></div>
        <div class="opacity"><span class="op-label">Opacity:</span><div class="slider"><i></i></div><div class="spin"><div class="entry">100.0</div><div class="step"><svg class="dim"><use href="#up"/></svg><svg><use href="#down"/></svg></div></div><span>%</span></div>
      </div>
      <div class="dialogs">
        <div class="dlg"><svg class="di"><use href="#align"/></svg><span>Align and Distribute (Shift+Ctrl+A)</span><svg class="cv"><use href="#up"/></svg></div>
        <div class="dlg"><svg class="di"><use href="#export"/></svg><span>Export PNG Image (Shift+Ctrl+E)</span><svg class="cv"><use href="#up"/></svg></div>
        <div class="dlg"><svg class="di"><use href="#layers"/></svg><span>Layers (Shift+Ctrl+L)</span><svg class="cv"><use href="#up"/></svg></div>
        <div class="dlg"><svg class="di"><use href="#props"/></svg><span>Object Properties (Shift+Ctrl+O)</span><svg class="cv"><use href="#up"/></svg></div>
        <div class="dlg on"><svg class="di"><use href="#layers"/></svg><span>Objects</span><svg class="cv"><use href="#up"/></svg></div>
      </div>
      <div class="grip"><i></i><i></i><i></i></div>
      <div class="fs-title"><svg class="di"><use href="#fillstroke"/></svg><span>Fill and Stroke (Shift+Ctrl+F)</span>
        <svg class="fs-btn" viewBox="0 0 12 12"><rect x="1" y="1" width="10" height="10" rx="1.500" fill="#eee" stroke="#888"/><path d="M8 3.500v5L4 6z" fill="#777"/></svg>
        <svg class="fs-btn" viewBox="0 0 12 12"><rect x="1" y="1" width="10" height="10" rx="1.500" fill="#eee" stroke="#888"/><path d="M3.500 3.500l5 5M8.500 3.500l-5 5" stroke="#777" stroke-width="1.800"/></svg></div>
      <div class="fs-frame">
        <div class="tabs">
          <div class="tab t1"><svg><use href="#fillicon"/></svg><span><u>F</u>ill</span></div>
          <div class="tab t2"><svg><use href="#strokeicon"/></svg><span>Stroke paint</span></div>
          <div class="tab t3 on"><svg><use href="#styleicon"/></svg><span>Stroke st<u>y</u>le</span></div>
        </div>
        <div class="style-page">
          <div class="row r1"><label><u>W</u>idth:</label><div class="spin w87"><div class="entry">100.000</div><div class="step"><svg><use href="#up"/></svg><svg><use href="#down"/></svg></div></div><div class="select unit"><span>%</span><svg class="ar"><use href="#updown"/></svg></div></div>
          <div class="row r2"><label>Dashes:</label><div class="select dashes"><svg width="74" height="3"><path d="M0 1.500h74" stroke="#a9a9a9" stroke-width="2" stroke-dasharray="8 8"/></svg><svg class="ar"><use href="#updown"/></svg></div><div class="spin w64"><div class="entry">8.30</div><div class="step"><svg><use href="#up"/></svg><svg><use href="#down"/></svg></div></div></div>
          <div class="row r3"><label>Markers:</label><div class="select marker"><b></b><svg class="ar"><use href="#updown"/></svg></div><div class="select marker"><b></b><svg class="ar"><use href="#updown"/></svg></div><div class="select marker last"><b></b><svg class="ar"><use href="#updown"/></svg></div></div>
          <div class="row r4"><label>Join:</label><span class="tog"><svg><use href="#joinround"/></svg></span><span class="tog"><svg><use href="#joinbevel"/></svg></span><span class="tog on"><svg><use href="#joinmiter"/></svg></span><div class="spin w72"><div class="entry">4.00</div><div class="step"><svg><use href="#up"/></svg><svg><use href="#down"/></svg></div></div></div>
          <div class="row r5"><label>Cap:</label><span class="tog on"><svg><use href="#capbutt"/></svg></span><span class="tog"><svg><use href="#capround"/></svg></span><span class="tog"><svg><use href="#capsquare"/></svg></span></div>
          <div class="row r6"><label>Order:</label><span class="tog on"><svg><use href="#order1"/></svg></span><span class="tog"><svg><use href="#order2"/></svg></span><span class="tog"><svg><use href="#order3"/></svg></span></div>
        </div>
      </div>
    </section>

    <div class="vscroll dock-scroll"><svg class="ar"><use href="#up"/></svg><i></i><svg class="ar"><use href="#down"/></svg></div>

    <aside class="snapbar">
      <span class="pressed"><svg><use href="#snap"/></svg></span><i></i>
      <span><svg><use href="#snap"/></svg></span><span><svg><use href="#snapbb"/></svg></span><span><svg><use href="#snapcorner"/></svg></span><span><svg><use href="#snapmid"/></svg></span><span><svg><use href="#snapcen"/></svg></span><i></i>
      <span class="pressed"><svg><use href="#snap"/></svg></span><span class="green"><svg><use href="#curve"/></svg></span><span><svg><use href="#cross"/></svg></span><span class="pressed"><svg><use href="#cusp"/></svg></span><span><svg><use href="#smooth"/></svg></span><span><svg><use href="#linemid"/></svg></span><i></i>
      <span class="pressed"><svg><use href="#snap"/></svg></span><span><svg><use href="#objmid"/></svg></span><span><svg><use href="#rotcen"/></svg></span><span><svg><use href="#textbase"/></svg></span><i></i>
      <span><svg><use href="#page"/></svg></span><span class="pressed"><svg><use href="#grid"/></svg></span><span class="pressed"><svg><use href="#guides"/></svg></span>
    </aside>
  </div>

  <div class="palette-row">
    <div class="palette" id="palette"><svg class="none" viewBox="0 0 16 16"><path d="M0 0h16v16H0z" fill="#fff"/><path d="M0 0l16 16M16 0L0 16" stroke="#6b1010" stroke-width="1.300"/></svg></div>
    <svg class="pal-arrow"><use href="#left"/></svg>
  </div>
  <div class="pal-scroll hscroll"><svg class="ar dim"><use href="#left"/></svg><i></i><svg class="ar"><use href="#right"/></svg></div>

  <footer class="statusbar">
    <div class="st-style"><div><span>Fill:</span><span>N/A</span></div><div><span>Stroke:</span><span>N/A</span></div></div>
    <span class="st-o">O:</span>
    <div class="spin off w46"><div class="entry">0</div><div class="step"><svg><use href="#up"/></svg><svg><use href="#down"/></svg></div></div>
    <i class="vline"></i>
    <svg class="st-ic"><use href="#eye"/></svg>
    <svg class="st-ic second"><use href="#unlock"/></svg>
    <div class="select layer"><span>•Layer 1</span><svg class="ar"><use href="#updown"/></svg></div>
    <p class="msg"><b>Click</b> or <b>click and drag</b> to start a path; with <b>Shift</b> to append to selected path. <b>Ctrl+click</b> to ...</p>
    <i class="vline"></i>
    <div class="coords"><div><span>X:</span><span class="mono">42.76</span></div><div><span>Y:</span><span class="mono">346.38</span></div></div>
    <span class="st-z">Z:</span>
    <div class="spin w55"><div class="entry">50%</div><div class="step"><svg><use href="#up"/></svg><svg><use href="#down"/></svg></div></div>
  </footer>
</div>

<svg class="notes" viewBox="0 0 3417 2928"><g fill="none" stroke="#f00" stroke-width="10" stroke-linecap="round" stroke-linejoin="round">
  <path d="M184 292C184 266 235 268 255 267 285 270 280 285 283 315 290 345 298 370 286 390 260 395 225 385 205 373 178 355 175 338 180 315 182 295 185 275 200 270"/>
  <path d="M266 463C268 440 300 435 317 447 332 470 315 500 290 525 272 542 268 554 275 550 290 545 300 535 312 543 325 556 332 556 333 541"/>
  <path d="M52 1453C70 1430 125 1450 145 1460 175 1465 195 1490 194 1515 190 1545 150 1552 110 1550 70 1552 40 1545 28 1510 26 1480 35 1453 75 1443"/>
  <path d="M282 1481q12 2 16-52l-1 134M278 1563q20-6 39 2"/>
</g></svg>
<script src="app.js"></script>
</body>
</html>
```
FILE: styles.css
```css
* { box-sizing: border-box; }
html, body { margin: 0; height: 976px; overflow: hidden; }
body {
  background: #888;
  font-family: "DejaVu Sans", sans-serif;
  font-size: 12.5px;
  color: #333;
  position: relative;
  white-space: nowrap;
}
svg { display: block; flex: none; }
u { text-decoration: underline; text-underline-offset: 2px; text-decoration-thickness: 1px; }
.sprite { position: absolute; }
.ar { width: 8px; height: 8px; color: #666; }
.ar.dim { color: #bbb; }
.grow { flex: 1; }

.window {
  width: 1109px;
  height: 955px;
  margin: 10px 0 0 15px;
  padding: 2px;
  border: 1px solid #0c0c0c;
  border-radius: 4px 4px 0 0;
  box-shadow: inset 0 0 0 1px #474747;
  background: #1e1e1e;
  display: flex;
  flex-direction: column;
}
.window > * { flex: none; }

/* title and menu */
.titlebar { height: 19px; display: flex; }
.wm-buttons { display: flex; gap: 1px; padding-left: 2px; width: 71px; }
.wm {
  width: 22px; height: 15px; margin-top: -1px;
  border: 1px solid #666; border-top: 0; border-radius: 0 0 2px 2px;
  background: linear-gradient(#484848, #303030);
  display: flex; align-items: center; justify-content: center;
}
.wm svg { width: 12px; height: 12px; }
.titlebar h1 { margin: 0; flex: 1; text-align: center; font-size: 12.3px; line-height: 18px; color: #fff; padding-right: 4px; }
.logo { width: 20px; height: 18px; margin: -1px 3px 0 0; }
.menubar { height: 21px; display: flex; gap: 14.200px; padding-left: 6.500px; font-size: 12.400px; line-height: 22px; color: #a9b4b4; }

/* command bar */
.toolbar { height: 38px; padding-left: 2px; display: flex; align-items: center; background: linear-gradient(184deg, #d4d4d4, #ececec); }
.ic { width: 24px; height: 24px; margin: 0 5px; }
.vsep { width: 12px; height: 20px; flex: none; background: linear-gradient(90deg, transparent 5px, #c4c4c4 5px 6px, #f5f5f5 6px 7px, transparent 7px); }

.options { height: 38px; display: flex; background: #ececec; }
.modebar { width: 954px; padding: 0 0 1px 6px; display: flex; align-items: center; font-size: 11px; background: linear-gradient(184deg, #d0d0d0, #ebebeb); }
.mode-label { width: 38px; }
.mode-btn { width: 30px; height: 32px; display: flex; align-items: center; justify-content: center; }
.mode-btn svg { width: 20px; height: 20px; }
.pressed { border: 1px solid #929292; border-radius: 3px; background: linear-gradient(#dedede, #c4c4c4); }
.mode-btn.pressed { width: 28px; margin: 0 1px; }
.shape-label { width: 49px; margin-left: 4px; }
.select {
  border: 1px solid #9b9b9b; border-radius: 3px;
  background: linear-gradient(#fff, #f2f2f2 50%, #dcdcdc);
  display: flex; align-items: center; justify-content: space-between;
  padding: 0 5px;
}
.shape { width: 145px; height: 25px; color: #222; }
.indicator { width: 149px; padding: 3px 0 0 7px; font-size: 11px; }
.ind-row { height: 16px; line-height: 16px; display: flex; }
.ind-row span:first-child { width: 43px; }
.ind-row em { padding-left: 27px; }
.ind-stroke { width: 73px; height: 16px; margin: 0 4px 0 0; background: #000; }

/* main area */
.main { height: 772px; display: flex; background: #ececec; overflow: hidden; }
.toolbox { width: 39px; padding: 2px 0 0 3px; }
.toolbox span { width: 30px; height: 30px; margin: 1px 0 2px; display: flex; align-items: center; justify-content: center; }
.toolbox svg { width: 24px; height: 24px; }
.editor { width: 661px; display: grid; grid-template-columns: 18px 613px 30px; grid-template-rows: 20px 732px 20px; }
.corner { padding: 3px 0 0 1px; }
.corner svg { width: 14px; height: 14px; }
.corner-btn { width: 16px; height: 16px; margin: 4px 0 0 4px; border: 1px solid #999; border-radius: 3px; background: linear-gradient(#fff, #ddd); }
.corner-btn svg { width: 14px; height: 14px; }
#vruler { overflow: visible; }
.ruler-text { font-size: 9.300px; fill: #333; letter-spacing: .15px; }
.canvas { background: #fff; padding: 96px 0 0 116px; }
.sheet { width: 394px; height: 557px; border: 1px solid #5e5e5e; background: #fff; box-shadow: 2px 2px 0 #666; }
.vscroll { width: 15px; height: 729px; margin: 4px 0 0 4px; border: 1px solid #d6d6d6; background: #f3f3f3; display: flex; flex-direction: column; align-items: center; justify-content: space-between; padding: 3px 0; }
.vscroll i { width: 13px; height: 286px; margin-top: -9px; background: linear-gradient(90deg, #a7b7c5, #93a5b5); border: 1px solid #9dadba; }
.hscroll { height: 15px; margin-top: 2px; border: 1px solid #d6d6d6; background: #f3f3f3; display: flex; align-items: center; justify-content: space-between; padding: 0 3px; }
.hscroll i { width: 275px; height: 13px; background: linear-gradient(#a7b7c5, #93a5b5); border: 1px solid #9dadba; margin-left: -7px; }
.cms { padding: 3px 0 0 4px; }
.cms svg { width: 14px; height: 14px; }

/* dock */
.dock { width: 352px; height: 771px; border: 1px solid #b4b4b4; padding-left: 3px; overflow: hidden; }
.objects { width: 344px; height: 354px; border: 1px solid #c8c8c8; border-top: 0; padding: 0 5px 0 4px; }
.list { height: 222px; border: 1px solid #b0b0b0; border-top: 0; background: #fff; }
.obj-tools { height: 34px; display: flex; align-items: center; margin: 0 -1px 0 -1px; }
.blend { height: 29px; margin: 2px 0 0 4px; display: flex; align-items: center; }
.blend .select { width: 235px; height: 28px; margin-left: auto; color: #222; }
.spin { display: flex; border: 1px solid #9b9b9b; border-radius: 3px; background: #fff; color: #333; }
.spin .entry { flex: 1; padding: 0 4px; display: flex; align-items: center; justify-content: space-between; }
.spin .step { width: 13px; border-left: 1px solid #b5b5b5; background: linear-gradient(#fff, #e2e2e2); display: flex; flex-direction: column; align-items: center; justify-content: space-around; border-radius: 0 3px 3px 0; }
.step svg { width: 8px; height: 8px; color: #666; }
.step svg.dim { color: #bbb; }
.blur { height: 24px; margin: 4px 0 0 5px; }
.blur .entry { padding: 0 5px; }
.opacity { height: 24px; margin: 6px 0 0 3px; display: flex; align-items: center; }
.op-label { width: 57px; font-size: 12.400px; }
.slider { width: 187px; height: 5px; border: 1px solid #96a5b3; border-radius: 3px; background: #b7c5d2; display: flex; align-items: center; justify-content: flex-end; }
.slider i { width: 24px; height: 13px; flex: none; border: 1px solid #999; border-radius: 3px; background: linear-gradient(#fff, #e3e3e3); }
.opacity .spin { width: 65px; height: 23px; margin: 0 3px 0 4px; }
.dialogs { padding: 2px 0 0 1px; }
.dlg { width: 344px; height: 22px; margin-bottom: 2px; border: 1px solid #a5a5a5; border-radius: 2px; background: linear-gradient(#fff, #f4f4f4 50%, #dcdcdc); display: flex; align-items: center; padding-left: 1px; font-size: 12.650px; }
.dlg span { flex: 1; margin: -1px 0 0 2px; }
.dlg.on { border-color: #888; background: linear-gradient(#e0e0e0, #bdbdbd); }
.dlg.on span { margin-top: 0; }
.di { width: 22px; height: 22px; margin: 0 -2px; }
.cv { width: 14px; height: 14px; margin-right: 3px; color: #b0b0b0; }
.dlg.on .cv { color: #333; }
.grip { height: 10px; display: flex; gap: 2px; justify-content: center; padding: 3px 2px 0 0; }
.grip i { width: 1px; height: 4px; background: #aaa; }
.fs-title { height: 22px; padding-bottom: 2px; margin-left: -1px; display: flex; align-items: center; font-size: 12.650px; }
.fs-title .di { margin: 0 -3px; }
.fs-title span { width: 288px; flex: none; }
.fs-btn { width: 12px; height: 12px; margin-right: 12px; }
.fs-frame { width: 345px; height: 300px; margin-left: -1px; border: 1px solid #c8c8c8; padding: 4px 4px 0 5px; }
.tabs { height: 26px; display: flex; align-items: flex-end; }
.tab { height: 23px; border: 1px solid #bbb; border-bottom: 0; border-right: 0; border-radius: 2px 2px 0 0; background: linear-gradient(#fafafa, #ececec); display: flex; align-items: center; gap: 4px; padding-left: 4px; color: #222; }
.tab svg { width: 12px; height: 12px; }
.t1 { width: 41px; padding-left: 3px; }
.t2 { width: 104px; padding-left: 3px; gap: 5px; font-size: 12.700px; }
.tab.on { width: 102px; height: 27px; border-right: 1px solid #bbb; background: #f5f5f5; margin-bottom: -1px; gap: 5px; }
.t3.on { padding-left: 3px; font-size: 12.800px; }
.style-page { height: 260px; border: 1px solid #b4b4b4; background: #f5f5f5; padding-top: 8px; color: #aaa; font-size: 12.650px; }
.row { display: flex; margin-bottom: 6px; align-items: center; }
.row label { width: 101px; padding-right: 4px; text-align: right; }
.row .spin, .off { background: #ebebeb; border-color: #c0c0c0; color: #aaa; }
.row .step, .off .step { background: #f2f2f2; border-color: #c8c8c8; }
.row .step svg, .off .step svg { color: #aaa; }
.row .select { background: linear-gradient(#fafafa, #e6e6e6); border-color: #c4c4c4; }
.row .ar { color: #999; }
.r1 { height: 27px; } .r2 { height: 24px; } .r3 { height: 32px; margin-bottom: 10px; } .r4, .r5, .r6 { height: 34px; }
.w87 { width: 87px; height: 23px; margin-right: 7px; }
.unit { width: 60px; height: 27px; }
.dashes { width: 110px; height: 24px; margin-right: 2px; }
.w64 { width: 64px; height: 23px; }
.w72 { width: 72px; height: 23px; }
.marker { width: 70px; height: 32px; margin-right: 6px; padding-left: 4px; }
.marker.last { width: 72px; margin: 0; }
.marker b { width: 20px; height: 2px; background: #b4b4b4; }
.tog { width: 34px; height: 34px; margin-right: 6px; border: 1px solid #c4c4c4; border-radius: 3px; background: linear-gradient(#fdfdfd, #e4e4e4); display: flex; align-items: center; justify-content: center; }
.tog svg { width: 28px; height: 28px; }
.tog.on { background: linear-gradient(#eaeaea, #f6f6f6 30%, #e8e8e8); border-color: #b8b8b8; }

.dock-scroll { height: 772px; margin: 0 0 0 1px; flex: none; }
.dock-scroll i { height: 583px; margin-top: -23px; }

.snapbar { width: 35px; padding: 2px 0 0 4px; }
.snapbar span { width: 28px; height: 28px; margin: 1px 0 2px; display: flex; align-items: center; justify-content: center; color: #777; }
.snapbar svg { width: 24px; height: 24px; }
.snapbar i { display: block; height: 11px; margin: 0 4px; background: linear-gradient(transparent 4px, #c8c8c8 4px 5px, #f8f8f8 5px 6px, transparent 6px); }
.snapbar .green { color: #22933a; }

/* palette */
.palette-row { height: 18px; display: flex; background: #ececec; }
.palette { width: 1090px; height: 18px; padding-left: 1px; border: 1px solid #b0b0b0; border-left: 0; display: flex; overflow: hidden; }
.palette > * { width: 16px; height: 16px; flex: none; }
.pal-arrow { width: 10px; height: 10px; margin: 1px 0 0 2px; color: #333; }
.pal-scroll { height: 16px; margin: 0; border-top: 2px solid #dcdcdc; box-shadow: 13px 0 0 #ececec; width: 1090px; padding-right: 3px; }
.pal-scroll i { width: 167px; margin-left: 1px; margin-right: auto; height: 13px; }

/* status bar */
.statusbar { height: 27px; background: #ececec; display: flex; align-items: center; font-size: 11px; }
.st-style { width: 125px; padding-left: 2px; line-height: 13px; }
.st-style div { display: flex; }
.st-style div span:first-child { width: 72px; }
.st-o { width: 16px; }
.w46 { width: 47px; height: 22px; }
.vline { width: 1px; height: 26px; background: #c8c8c8; margin-left: 3px; }
.st-ic { width: 14px; height: 14px; margin-left: 6px; }
.st-ic.second { margin-left: 10px; }
.layer { width: 88px; height: 25px; margin-left: 6px; font-weight: bold; color: #222; }
.msg { margin: 0 0 0 2px; width: 621px; font-size: 12.830px; }
.coords { width: 64px; margin-left: 3px; line-height: 13px; }
.coords div { display: flex; justify-content: space-between; }
.mono { font-family: "DejaVu Sans Mono", monospace; font-size: 11.700px; }
.st-z { width: 23px; padding-left: 8px; }
.w55 { width: 56px; height: 22px; }
.w55 .entry { justify-content: flex-end; padding-right: 7px; }

.notes { position: absolute; left: 0; top: 0; width: 1139px; height: 976px; pointer-events: none; }
```
FILE: app.js
```js
const NS = 'http://www.w3.org/2000/svg';
const STEP = 9.37;

function add(parent, tag, attrs, text) {
  const el = document.createElementNS(NS, tag);
  for (const key in attrs) el.setAttribute(key, attrs[key]);
  if (text !== undefined) el.textContent = text;
  parent.appendChild(el);
}

// Horizontal ruler: zero sits 116px from the left edge of the canvas.
const h = document.getElementById('hruler');
let hp = 'M0 19.5H613';
for (let k = -12; k <= 53; k++) {
  const x = Math.round(116.25 + k * STEP) + 0.5;
  if (x < 4 || x > 613) continue;
  const len = k % 10 === 0 ? 17 : k % 2 === 0 ? 8 : 5;
  hp += `M${x} 19.5v${-len}`;
  if (k % 10 === 0) add(h, 'text', { x: x + 1.5, y: 9.5, class: 'ruler-text' }, k * 5);
}
add(h, 'path', { d: hp, stroke: '#333', fill: 'none' });
add(h, 'path', { d: 'M212 13h11l-5.500 6z', fill: '#333' });

// Vertical ruler: zero sits 652px below the top of the canvas.
const v = document.getElementById('vruler');
let vp = 'M17.5 0V731';
for (let k = -8; k <= 70; k++) {
  const y = Math.round(652.2 - k * STEP) + 0.5;
  const len = k % 10 === 0 ? 17 : k % 2 === 0 ? 8 : 5;
  if (y > 0 && y < 731) vp += `M17.5 ${y}h${-len}`;
  if (k >= 0 && k % 10 === 0) {
    const base = Math.max(y + 8.5, 7);
    String(k * 5).split('').forEach((c, i) => {
      add(v, 'text', { x: 0, y: base + i * 9, class: 'ruler-text' }, c);
    });
  }
}
add(v, 'path', { d: vp, stroke: '#333', fill: 'none' });
add(v, 'path', { d: 'M11 -1v11l6-5.500z', fill: '#333' });

const colors = ('000000 1a1a1a 333333 4d4d4d 666666 808080 999999 b3b3b3 cccccc e6e6e6 ececec f2f2f2 f9f9f9 ffffff ' +
  '800000 ff0000 808000 ffff00 008000 00ff00 008080 00ffff 000080 0000ff 800080 ff00ff ' +
  '2b0000 550000 800000 aa0000 d40000 ff0000 ff2a2a ff5555 ff8080 ffaaaa ffd5d5 ' +
  '280b0b 501616 782121 a02c2c c83737 d35f5f de8787 e9afaf f4d7d7 ' +
  '241c1c 483737 6c5353 916f6f ac9393 c8b7b7 e3dbdb ' +
  '2b1100 552200 803300 aa4400 d45500 ff6600 ff7f2a ff9955 ffb380 ffccaa ffe6d5 ' +
  '28170b 502d16 784421 a05a2c').split(' ');
const palette = document.getElementById('palette');
for (const c of colors) {
  const sw = document.createElement('span');
  sw.style.background = '#' + c;
  palette.appendChild(sw);
}
```
